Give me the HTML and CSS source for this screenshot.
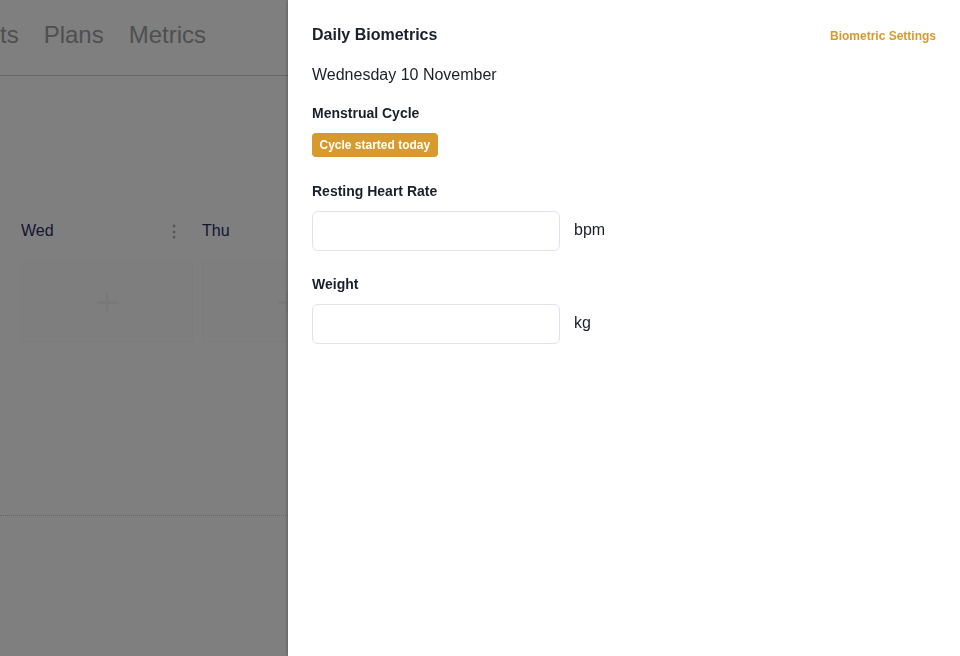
FILE: index.html
```html
<!DOCTYPE html>
<html lang="en">
<head>
<meta charset="utf-8">
<title>Daily Biometrics</title>
<link rel="stylesheet" href="styles.css">
</head>
<body>
<div class="page">
  <header class="topnav">
    <span class="nav-item">ts</span>
    <span class="nav-item">Plans</span>
    <span class="nav-item">Metrics</span>
  </header>
  <section class="week">
    <div class="day">
      <div class="day-head"><span class="day-name">Wed</span><span class="day-menu">&#8942;</span></div>
      <div class="day-card"><span class="plus">+</span></div>
    </div>
    <div class="day">
      <div class="day-head"><span class="day-name">Thu</span><span class="day-menu">&#8942;</span></div>
      <div class="day-card"><span class="plus">+</span></div>
    </div>
  </section>
  <div class="divider"></div>
</div>
<div class="overlay"></div>
<aside class="drawer">
  <div class="drawer-head">
    <h2 class="title">Daily Biometrics</h2>
    <a class="settings-link" href="#">Biometric Settings</a>
  </div>
  <p class="date">Wednesday 10 November</p>
  <div class="field first">
    <div class="label">Menstrual Cycle</div>
    <span class="badge">Cycle started today</span>
  </div>
  <div class="field">
    <div class="label">Resting Heart Rate</div>
    <div class="input-row"><input class="input" type="text"><span class="unit">bpm</span></div>
  </div>
  <div class="field">
    <div class="label">Weight</div>
    <div class="input-row"><input class="input" type="text"><span class="unit">kg</span></div>
  </div>
</aside>
</body>
</html>
```
FILE: styles.css
```css
* { box-sizing: border-box; }
html, body { margin: 0; padding: 0; height: 100%; }
body {
  font-family: "Liberation Sans", Arial, sans-serif;
  background: #fff;
  overflow: hidden;
}
.page { width: 960px; height: 656px; }
.topnav {
  display: flex;
  gap: 25px;
  height: 76px;
  padding-top: 21px;
  border-bottom: 1px solid #cdcdcd;
}
.nav-item { font-size: 24px; line-height: 28px; color: #9e9e9e; }
.week {
  display: flex;
  gap: 9px;
  padding: 145px 0 0 21px;
}
.day { width: 172px; flex: none; }
.day-head {
  display: flex;
  justify-content: space-between;
  align-items: center;
  height: 20px;
  margin-bottom: 21px;
  padding-right: 16px;
}
.day-name { font-size: 16px; color: #2b2b66; }
.day-menu { font-size: 16px; color: #aaa; width: 6px; font-weight: 700; margin-right: 5px; }
.day-card {
  height: 80px;
  background: #fdfdfd;
  border: 1px solid #f8f8f8;
  display: flex;
  align-items: center;
  justify-content: center;
}
.plus { font-size: 40px; font-weight: 300; color: #f2f2f2; line-height: 1; }
.divider {
  margin-top: 173px;
  border-top: 1px dotted #d0d0d0;
  width: 288px;
}
.overlay {
  position: fixed;
  inset: 0;
  background: rgba(0, 0, 0, 0.5);
}
.drawer {
  position: fixed;
  top: 0;
  right: 0;
  bottom: 0;
  width: 672px;
  background: #fff;
  padding: 25px 24px;
  color: #1b1e2b;
  box-shadow: -1px 0 3px rgba(0, 0, 0, 0.25);
}
.drawer-head {
  display: flex;
  justify-content: space-between;
  align-items: center;
  height: 20px;
}
.title { margin: 0; font-size: 16px; line-height: 20px; font-weight: 700; }
.settings-link {
  font-size: 12px;
  font-weight: 700;
  color: #d69a2d;
  text-decoration: none;
  margin-top: 1px;
}
.date { margin: 20px 0 0; font-size: 16px; line-height: 20px; }
.field { margin-top: 24px; }
.field.first { margin-top: 19px; }
.field.first + .field { margin-top: 25px; }
.label { font-size: 14px; line-height: 18px; font-weight: 700; margin-bottom: 11px; }
.badge {
  display: inline-block;
  background: #d69a2e;
  color: #fff;
  font-size: 12px;
  font-weight: 700;
  line-height: 24px;
  padding: 0 7.5px;
  border-radius: 4px;
}
.input-row { display: flex; align-items: center; gap: 14px; }
.input {
  width: 248px;
  height: 40px;
  border: 1px solid #dfe3ec;
  border-radius: 6px;
  font: inherit;
  padding: 0 12px;
  margin: 0;
  outline: none;
}
.unit { font-size: 16px; line-height: 20px; margin-top: -2px; }
```
